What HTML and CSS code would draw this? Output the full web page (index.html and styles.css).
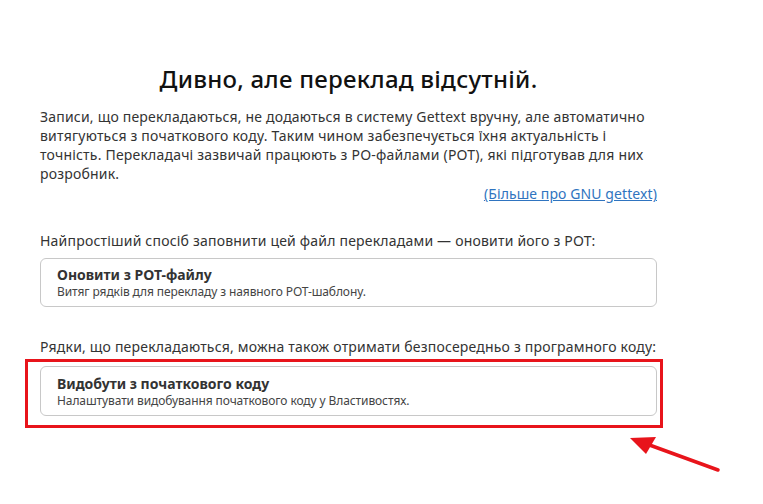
FILE: index.html
```html
<!DOCTYPE html>
<html lang="uk">
    <head>
        <meta charset="UTF-8">
        <meta name="viewport" content="width=device-width,initial-scale=1.0">
        <title>Gettext</title>
        <link rel="stylesheet" href="styles.css">
    </head>
    <body>
        <div class="page">
            <h1 class="heading">Дивно, але переклад відсутній.</h1>
            <p class="intro">Записи, що перекладаються, не додаються в систему Gettext вручну, але автоматично витягуються з початкового коду. Таким чином забезпечується їхня актуальність і точність. Перекладачі зазвичай працюють з PO-файлами (POT), які підготував для них розробник.</p>
            <div class="more">
                <a href="#">(Більше про GNU gettext)</a>
            </div>

            <p class="hint first-hint">Найпростіший спосіб заповнити цей файл перекладами — оновити його з POT:</p>
            <div class="option">
                <span class="option-title">Оновити з POT-файлу</span>
                <span class="option-desc">Витяг рядків для перекладу з наявного POT-шаблону.</span>
            </div>

            <p class="hint second-hint">Рядки, що перекладаються, можна також отримати безпосередньо з програмного коду:</p>
            <div class="option second-option">
                <span class="option-title">Видобути з початкового коду</span>
                <span class="option-desc">Налаштувати видобування початкового коду у Властивостях.</span>
            </div>
        </div>

        <div class="mark"></div>
        <svg class="arrow" width="100" height="40" viewBox="0 0 100 40">
            <line x1="88" y1="36" x2="14" y2="9" stroke="#e8141b" stroke-width="3.5" stroke-linecap="round"/>
            <polygon points="0,4 26,3 16,20" fill="#e8141b"/>
        </svg>
    </body>
</html>
```

FILE: styles.css
```css
*{
    margin: 0;
    padding: 0;
    box-sizing: border-box;
}
body{
    position: relative;
    min-height: 100vh;
    background-color: #fff;
    font-family: "Noto Sans", "DejaVu Sans", sans-serif;
    color: #333;
}
.page{
    width: 617px;
    margin-left: 40px;
    padding-top: 62px;
}
.heading{
    text-align: center;
    font-size: 24px;
    font-weight: 500;
    letter-spacing: 0.25px;
    color: #111;
    margin-bottom: 12px;
}
.intro{
    font-size: 14px;
    line-height: 19px;
    letter-spacing: 0.2px;
}
.more{
    text-align: right;
    margin-top: 1px;
    font-size: 14px;
    line-height: 19px;
    letter-spacing: 0.1px;
}
.more a{
    color: #2f74c0;
}
.hint{
    font-size: 14px;
    line-height: 19px;
    letter-spacing: 0.2px;
}
.first-hint{
    margin-top: 28px;
}
.second-hint{
    margin-top: 30px;
}
.option{
    display: flex;
    flex-direction: column;
    margin-top: 8px;
    height: 49px;
    padding: 6px 16px 0;
    border: 1px solid #c8c8c8;
    border-radius: 6px;
    background-color: #fff;
}
.second-option{
    margin-top: 10px;
    height: 50px;
    padding-top: 7px;
}
.option-title{
    font-size: 14px;
    font-weight: 700;
    line-height: 19px;
    color: #333;
}
.option-desc{
    font-size: 12px;
    line-height: 16px;
    letter-spacing: -0.1px;
    color: #444;
}
.mark{
    position: absolute;
    left: 25px;
    top: 359px;
    width: 638px;
    height: 69px;
    border: 3px solid #e8141b;
}
.arrow{
    position: absolute;
    left: 630px;
    top: 434px;
}
```
